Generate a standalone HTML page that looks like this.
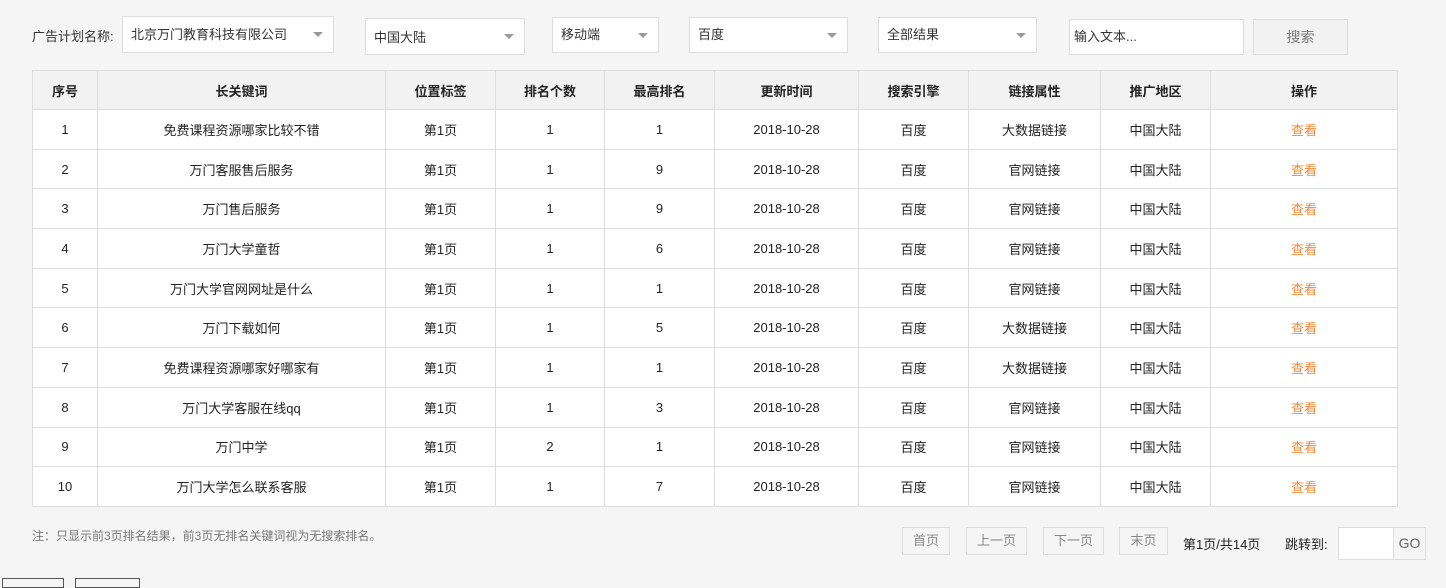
<!DOCTYPE html>
<html><head><meta charset="utf-8"><style>
*{box-sizing:border-box;margin:0;padding:0}
body{width:1446px;height:581px;background:#f5f5f5;font-family:"Liberation Sans","Noto Sans CJK SC",sans-serif;font-size:13px;color:#333;position:relative;overflow:hidden}
.a{position:absolute}
.sel{position:absolute;background:#fff;border:1px solid #ddd;padding-left:8px;line-height:34px;font-size:13px;color:#333}
.sel:after{content:"";position:absolute;right:10px;top:15px;border-left:5px solid transparent;border-right:5px solid transparent;border-top:5px solid #999}
table{position:absolute;left:32px;top:70px;border-collapse:collapse;background:#fff;table-layout:fixed}
td,th{border:1px solid #ddd;text-align:center;font-size:13px;color:#222;height:39.7px;padding:0}
th{background:#f2f2f2;height:39px;font-weight:bold}
td.o{color:#f08a3c}
.pb{position:absolute;top:527px;height:28px;border:1px solid #ddd;background:#f5f5f5;color:#888;text-align:center;line-height:26px}
</style></head><body>
<div class="a" style="left:32px;top:28px;line-height:18px">广告计划名称:</div>
<div class="sel" style="left:122px;top:16px;width:212px;height:37px;line-height:35px">北京万门教育科技有限公司</div>
<div class="sel" style="left:365px;top:18px;width:160px;height:37px;line-height:38px">中国大陆</div>
<div class="sel" style="left:552px;top:17px;width:107px;height:36px">移动端</div>
<div class="sel" style="left:689px;top:17px;width:159px;height:36px">百度</div>
<div class="sel" style="left:878px;top:17px;width:159px;height:36px">全部结果</div>
<div class="a" style="left:1069px;top:19px;width:175px;height:36px;background:#fff;border:1px solid #ddd;padding-left:4px;line-height:34px">输入文本...</div>
<div class="a" style="left:1253px;top:19px;width:95px;height:36px;background:#f2f2f2;border:1px solid #ddd;text-align:center;line-height:34px;color:#777;font-size:14px">搜索</div>
<table>
<colgroup><col style="width:65px"><col style="width:288px"><col style="width:110px"><col style="width:109px"><col style="width:110px"><col style="width:144px"><col style="width:110px"><col style="width:132px"><col style="width:110px"><col style="width:187px"></colgroup>
<tr><th>序号</th><th>长关键词</th><th>位置标签</th><th>排名个数</th><th>最高排名</th><th>更新时间</th><th>搜索引擎</th><th>链接属性</th><th>推广地区</th><th>操作</th></tr>
<tr><td>1</td><td>免费课程资源哪家比较不错</td><td>第1页</td><td>1</td><td>1</td><td>2018-10-28</td><td>百度</td><td>大数据链接</td><td>中国大陆</td><td class="o">查看</td></tr>
<tr><td>2</td><td>万门客服售后服务</td><td>第1页</td><td>1</td><td>9</td><td>2018-10-28</td><td>百度</td><td>官网链接</td><td>中国大陆</td><td class="o">查看</td></tr>
<tr><td>3</td><td>万门售后服务</td><td>第1页</td><td>1</td><td>9</td><td>2018-10-28</td><td>百度</td><td>官网链接</td><td>中国大陆</td><td class="o">查看</td></tr>
<tr><td>4</td><td>万门大学童哲</td><td>第1页</td><td>1</td><td>6</td><td>2018-10-28</td><td>百度</td><td>官网链接</td><td>中国大陆</td><td class="o">查看</td></tr>
<tr><td>5</td><td>万门大学官网网址是什么</td><td>第1页</td><td>1</td><td>1</td><td>2018-10-28</td><td>百度</td><td>官网链接</td><td>中国大陆</td><td class="o">查看</td></tr>
<tr><td>6</td><td>万门下载如何</td><td>第1页</td><td>1</td><td>5</td><td>2018-10-28</td><td>百度</td><td>大数据链接</td><td>中国大陆</td><td class="o">查看</td></tr>
<tr><td>7</td><td>免费课程资源哪家好哪家有</td><td>第1页</td><td>1</td><td>1</td><td>2018-10-28</td><td>百度</td><td>大数据链接</td><td>中国大陆</td><td class="o">查看</td></tr>
<tr><td>8</td><td>万门大学客服在线qq</td><td>第1页</td><td>1</td><td>3</td><td>2018-10-28</td><td>百度</td><td>官网链接</td><td>中国大陆</td><td class="o">查看</td></tr>
<tr><td>9</td><td>万门中学</td><td>第1页</td><td>2</td><td>1</td><td>2018-10-28</td><td>百度</td><td>官网链接</td><td>中国大陆</td><td class="o">查看</td></tr>
<tr><td>10</td><td>万门大学怎么联系客服</td><td>第1页</td><td>1</td><td>7</td><td>2018-10-28</td><td>百度</td><td>官网链接</td><td>中国大陆</td><td class="o">查看</td></tr>
</table>
<div class="a" style="left:32px;top:527px;color:#777;font-size:12px">注：只显示前3页排名结果，前3页无排名关键词视为无搜索排名。</div>
<div class="pb" style="left:902px;width:48px">首页</div>
<div class="pb" style="left:966px;width:61px">上一页</div>
<div class="pb" style="left:1043px;width:61px">下一页</div>
<div class="pb" style="left:1119px;width:49px">末页</div>
<div class="a" style="left:1183px;top:534px;color:#222">第1页/共14页</div>
<div class="a" style="left:1285px;top:534px;color:#222">跳转到:</div>
<div class="a" style="left:1338px;top:527px;width:56px;height:33px;background:#fff;border:1px solid #ddd"></div>
<div class="a" style="left:1393px;top:527px;width:33px;height:33px;border:1px solid #ddd;text-align:center;line-height:31px;color:#666;font-size:14px">GO</div>
<div class="a" style="left:2px;top:578px;width:62px;height:10px;border:1px solid #555"></div>
<div class="a" style="left:75px;top:578px;width:65px;height:10px;border:1px solid #555"></div>
</body></html>
